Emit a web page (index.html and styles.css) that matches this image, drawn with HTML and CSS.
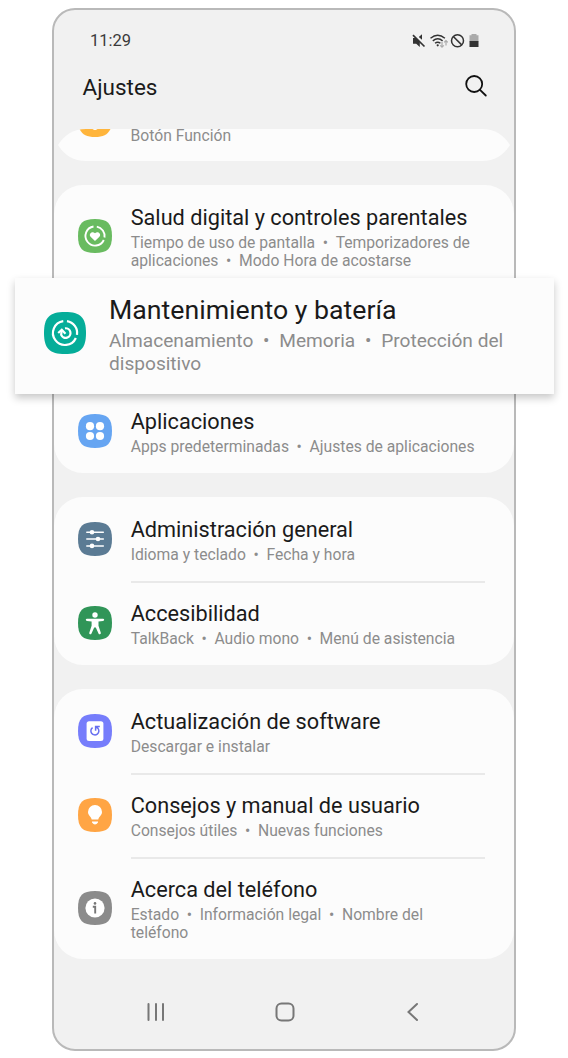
FILE: index.html
```html
<!DOCTYPE html>
<html lang="es">
<head>
<meta charset="utf-8">
<title>Ajustes</title>
<link rel="stylesheet" href="styles.css">
</head>
<body>
<main class="stage">
<div class="phone">
  <div class="status">
    <span class="clock">11:29</span>
    <svg class="status-icons" width="70" height="16" viewBox="0 0 70 16">
      <path fill="#333" d="M2 5h3.200l3.600 3.500V14L5.200 10.800H2zM11 1.300v5.400L7.800 4z"/>
      <path stroke="#333" stroke-width="1.700" d="M2 2.200l11.500 11.300"/>
      <g fill="none" stroke="#333" stroke-width="1.400"><path d="M19.500 5.300q7.200-6.200 14.400 0M21.800 7.900q5-4.200 9.800 0M24 10.300q2.700-2 5.400 0"/></g>
      <circle cx="26.700" cy="12.300" r="1.100" fill="#333"/>
      <path fill="none" stroke="#aaa" stroke-width="1.200" d="M31 9v5M29.200 12.300l1.800 1.900 1.800-1.900M35 12.500V7.500M33.200 9.400L35 7.500l1.800 1.900"/>
      <circle cx="46.500" cy="7.700" r="6" fill="none" stroke="#333" stroke-width="1.500"/>
      <path stroke="#333" stroke-width="1.500" d="M42.300 3.500l8.400 8.400"/>
      <path fill="#aaa" d="M60.500 1h5v1.300h2V8.500h-9V2.300h2z"/>
      <path fill="#333" d="M58.500 8h9v6h-9z"/>
    </svg>
  </div>
  <header class="appbar">
    <h1 class="page-title">Ajustes</h1>
    <svg class="search" width="24" height="24" viewBox="0 0 24 24" fill="none" stroke="#111" stroke-width="1.800" stroke-linecap="round"><circle cx="10.200" cy="10" r="8"/><path d="M16 15.800l5.800 5.700"/></svg>
  </header>
  <section class="card card-cut">
    <svg class="cut-icon" width="34" height="9" viewBox="0 0 34 9"><path fill="#ffb53c" d="M1.500 0H32.500C29.500 6 25 8 17 8S4.500 6 1.500 0z"/><path fill="#fff" d="M14.500 0h5q-2.500 1.800-5 0z"/></svg>
    <p class="sub">Botón Función</p>
  </section>
  <section class="card">
    <div class="row tall">
      <svg class="icon" viewBox="0 0 34 34"><path fill="#69bb60" d="M17 0C29.500 0 34 4.500 34 17S29.500 34 17 34 0 29.500 0 17 4.500 0 17 0z"/>
        <g fill="none" stroke="#fff" stroke-width="1.900"><path d="M15.500 7.500A9.600 9.600 0 1 0 25.800 21"/><path d="M18.800 7.600A9.600 9.600 0 0 1 26.500 18.500"/></g>
        <path fill="#fff" d="M17 22l-4.400-4.200c-2.500-3 1.700-6.400 4.400-3.500 2.700-2.900 6.900.5 4.400 3.500z"/></svg>
      <div class="text"><h2 class="title">Salud digital y controles parentales</h2><p class="sub">Tiempo de uso de pantalla<i class="dot">•</i>Temporizadores de<br>aplicaciones<i class="dot">•</i>Modo Hora de acostarse</p></div>
    </div>
    <div class="row tall"></div>
    <div class="row">
      <svg class="icon" viewBox="0 0 34 34"><path fill="#66a5f2" d="M17 0C29.500 0 34 4.500 34 17S29.500 34 17 34 0 29.500 0 17 4.500 0 17 0z"/><g fill="#fff"><circle cx="12" cy="12.200" r="4.100"/><circle cx="22" cy="12.200" r="4.100"/><circle cx="12" cy="22" r="4.100"/><circle cx="22" cy="22" r="4.100"/></g></svg>
      <div class="text"><h2 class="title">Aplicaciones</h2><p class="sub">Apps predeterminadas<i class="dot">•</i>Ajustes de aplicaciones</p></div>
    </div>
  </section>
  <section class="card">
    <div class="row">
      <svg class="icon" viewBox="0 0 34 34"><path fill="#5b7b94" d="M17 0C29.500 0 34 4.500 34 17S29.500 34 17 34 0 29.500 0 17 4.500 0 17 0z"/><path stroke="#fff" stroke-width="1.500" stroke-linecap="round" d="M8.800 10.200h16.500M8.800 17h16.500M8.800 23.900h16.500"/><g fill="#fff"><circle cx="14" cy="10.200" r="2.300"/><circle cx="20" cy="17" r="2.300"/><circle cx="14" cy="23.900" r="2.300"/></g></svg>
      <div class="text"><h2 class="title">Administración general</h2><p class="sub">Idioma y teclado<i class="dot">•</i>Fecha y hora</p></div>
    </div>
    <div class="row lined">
      <svg class="icon" viewBox="0 0 34 34"><path fill="#309558" d="M17 0C29.500 0 34 4.500 34 17S29.500 34 17 34 0 29.500 0 17 4.500 0 17 0z"/><circle cx="17" cy="9" r="2.700" fill="#fff"/><path fill="#fff" d="M9 12.800h16q1.200 0 1.200 1T25 14.900l-4.500.6v4.300l2.300 7q.3 1.200-.9 1.500-1 .2-1.400-.9L17.800 21.500h-1.600l-2.700 5.900q-.5 1.100-1.500.8-1-.4-.7-1.500l2.300-6.900v-4.300L9 14.900q-1.200-.1-1.200-1.100T9 12.800z"/></svg>
      <div class="text"><h2 class="title">Accesibilidad</h2><p class="sub">TalkBack<i class="dot">•</i>Audio mono<i class="dot">•</i>Menú de asistencia</p></div>
    </div>
  </section>
  <section class="card">
    <div class="row">
      <svg class="icon" viewBox="0 0 34 34"><path fill="#767dfb" d="M17 0C29.500 0 34 4.500 34 17S29.500 34 17 34 0 29.500 0 17 4.500 0 17 0z"/><rect x="8.600" y="7.300" width="16.800" height="19.600" rx="2.500" fill="#fff"/><path fill="none" stroke="#6870f0" stroke-width="1.500" d="M14.600 13.600A4 4 0 1 0 20 14.400L18 12.800M21.800 12.600H17.600V16.800"/></svg>
      <div class="text"><h2 class="title">Actualización de software</h2><p class="sub">Descargar e instalar</p></div>
    </div>
    <div class="row lined">
      <svg class="icon" viewBox="0 0 34 34"><path fill="#ffa544" d="M17 0C29.500 0 34 4.500 34 17S29.500 34 17 34 0 29.500 0 17 4.500 0 17 0z"/><path fill="#fff" d="M17 7a6.900 6.900 0 0 1 7 6.900c0 3.300-3.200 4.500-3.700 7.600h-6.600C13.200 18.400 10 17.200 10 13.900A6.900 6.900 0 0 1 17 7zM14 23.600h6v.8q-3 4.200-6 0z"/></svg>
      <div class="text"><h2 class="title">Consejos y manual de usuario</h2><p class="sub">Consejos útiles<i class="dot">•</i>Nuevas funciones</p></div>
    </div>
    <div class="row tall lined">
      <svg class="icon" viewBox="0 0 34 34"><path fill="#8b8b8b" d="M17 0C29.500 0 34 4.500 34 17S29.500 34 17 34 0 29.500 0 17 4.500 0 17 0z"/><circle cx="17" cy="17" r="9.600" fill="#fff"/><circle cx="17" cy="12.400" r="1.300" fill="#777"/><path fill="none" stroke="#777" stroke-width="1.900" d="M14.800 15.800h2.400v6.600"/></svg>
      <div class="text"><h2 class="title">Acerca del teléfono</h2><p class="sub">Estado<i class="dot">•</i>Información legal<i class="dot">•</i>Nombre del<br>teléfono</p></div>
    </div>
  </section>
  <nav class="nav">
    <svg width="20" height="20" viewBox="0 0 20 20" stroke="#777" stroke-width="2" stroke-linecap="round"><path d="M2.500 2v16M10 2v16M17 2v16"/></svg>
    <svg width="20" height="20" viewBox="0 0 20 20" fill="none" stroke="#777" stroke-width="2"><rect x="1.500" y="1.500" width="17" height="17" rx="5"/></svg>
    <svg width="20" height="20" viewBox="0 0 20 20" fill="none" stroke="#777" stroke-width="2" stroke-linecap="round"><path d="M14 2L5.500 10l8.500 8"/></svg>
  </nav>
</div>
<section class="callout">
  <svg class="icon" viewBox="0 0 34 34"><path fill="#05ad99" d="M17 0C29.500 0 34 4.500 34 17S29.500 34 17 34 0 29.500 0 17 4.500 0 17 0z"/>
    <g fill="none" stroke="#fff" stroke-width="1.800"><path d="M15.600 7.400A9.700 9.700 0 1 0 25.800 21"/><path d="M18.600 7.400A9.700 9.700 0 0 1 26.700 18.500"/><path d="M17 13.200A3.900 3.900 0 1 1 13.900 18.500L14.300 15"/><path d="M11.500 17L14.400 14.400 17.400 17.600"/></g></svg>
  <div class="text"><h2 class="title">Mantenimiento y batería</h2><p class="sub">Almacenamiento<i class="dot">•</i>Memoria<i class="dot">•</i>Protección del<br>dispositivo</p></div>
</section>
</main>
</body>
</html>
```
FILE: styles.css
```css
* { box-sizing: border-box; }
body { margin: 0; background: #fff; font-family: Roboto, "Liberation Sans", sans-serif; }
h1, h2, p { margin: 0; font-weight: 400; }
svg { display: block; flex: none; }
.stage { position: relative; width: 568px; height: 1058px; padding: 8px 52px; overflow: hidden; }
.phone { width: 464px; height: 1043px; border: 2px solid #b9b9b9; border-radius: 23px; background: #f1f1f1; display: flex; flex-direction: column; overflow: hidden; }
.status { height: 46px; flex: none; padding: 15px 33px 0 36px; display: flex; justify-content: space-between; align-items: center; }
.clock { font-size: 16.500px; line-height: 21px; color: #3a3a3a; }
.appbar { height: 73px; flex: none; padding: 18px 26px 0 28.500px; display: flex; justify-content: space-between; align-items: flex-start; }
.page-title { font-size: 22.500px; line-height: 26px; color: #1a1a1a; }
.card { flex: none; margin-bottom: 24px; border-radius: 29px; background: #fcfcfc; }
.card-cut { height: 32px; margin: 0 4px 24px; padding-left: 20px; display: flex; gap: 18.500px; border-radius: 0; clip-path: path("M0 16Q10 0 28 0H424Q442 0 452 16Q442 32 424 32H28Q10 32 0 16z"); }
.card-cut .sub { margin-top: -2px; }
.row { position: relative; height: 84px; padding-left: 23.500px; display: flex; align-items: center; gap: 19.200px; }
.row.tall { height: 102px; }
.lined::before { content: ""; position: absolute; top: 0; left: 77px; right: 29px; height: 2px; background: #e9e9e9; }
.icon { width: 34px; height: 34px; }
.text { padding-top: 2px; }
.title { font-size: 21.700px; line-height: 27px; color: #1a1a1a; white-space: nowrap; }
.sub { font-size: 15.700px; line-height: 18px; color: #8c8c8c; white-space: nowrap; }
.text .sub { margin-top: 3px; }
.dot { display: inline-block; width: 20.500px; text-align: center; font-style: normal; line-height: 1; }
.nav { flex: none; margin-top: 19px; padding: 0 91px 0 92px; display: flex; justify-content: space-between; }
.callout { position: absolute; left: 15px; top: 278px; width: 539px; height: 116px; padding: 15px 0 0 29px; display: flex; gap: 23px; background: #fcfcfc; box-shadow: 0 4px 8px rgba(0, 0, 0, .22); }
.callout .icon { width: 42px; height: 42px; margin-top: 19px; }
.callout .text { padding-top: 0; }
.callout .title { font-size: 26.700px; line-height: 34px; }
.callout .sub { font-size: 19.100px; line-height: 22.500px; margin-top: 3px; }
.callout .dot { width: 26px; }
```
